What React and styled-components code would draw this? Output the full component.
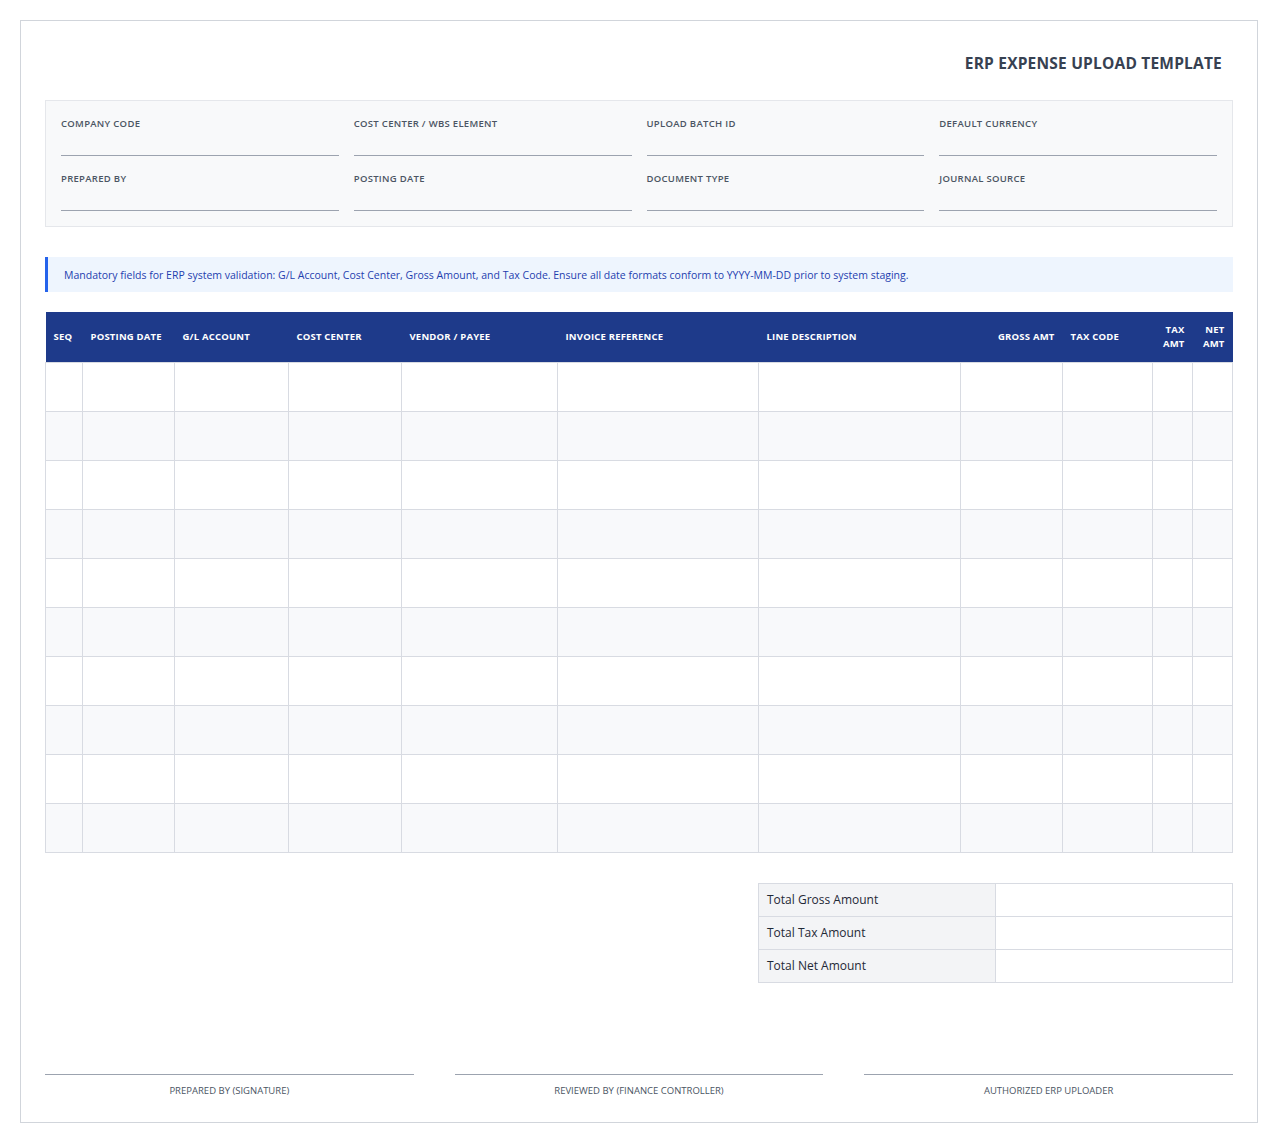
import React from 'react';
import styled, { createGlobalStyle } from 'styled-components';

const Global = createGlobalStyle`
  body { margin: 20px; background: #fff; font-family: "Open Sans", "Noto Sans", sans-serif; color: #1f2937; }
  * { box-sizing: border-box; }
`;

const Sheet = styled.div`
  width: 1238px;
  height: 1103px;
  border: 1px solid #d1d5db;
  padding: 24px 24px 24px;
  display: flex;
  flex-direction: column;
`;

const Title = styled.h1`
  margin: 7px 11px 0 0;
  text-align: right;
  font-size: 15.5px;
  font-weight: 700;
  color: #374151;
  letter-spacing: 0.2px;
  line-height: 22px;
`;

const Meta = styled.div`
  margin-top: 26px;
  background: #f8f9fa;
  border: 1px solid #e5e7eb;
  padding: 16px 15px 15px;
  display: grid;
  grid-template-columns: repeat(4, 1fr);
  column-gap: 15px;
  row-gap: 16px;
`;

const Field = styled.div`
  display: flex;
  flex-direction: column;
`;

const FieldLabel = styled.label`
  font-size: 9.5px;
  font-weight: 600;
  color: #4b5563;
  letter-spacing: 0.3px;
  line-height: 14px;
`;

const FieldLine = styled.div`
  height: 25px;
  border-bottom: 1px solid #9ca3af;
`;

const Notice = styled.div`
  margin-top: 30px;
  height: 35px;
  display: flex;
  align-items: center;
  background: #eef5fe;
  border-left: 3px solid #2563eb;
  padding-left: 16px;
  font-size: 10.5px;
  color: #1e40af;
`;

const Grid = styled.table`
  margin-top: 20px;
  width: 100%;
  border-collapse: collapse;
  table-layout: fixed;
`;

const Th = styled.th`
  background: #1e3a8a;
  color: #fff;
  font-size: 9.5px;
  font-weight: 700;
  height: 50px;
  padding: 0 8px;
  text-align: ${p => (p.$right ? 'right' : 'left')};
  letter-spacing: 0.2px;
  line-height: 14px;
`;

const Td = styled.td`
  height: 49px;
  border: 1px solid #d8dbe2;
  background: ${p => (p.$alt ? '#f8f9fb' : '#fff')};
`;

const Totals = styled.table`
  margin-top: 30px;
  margin-left: auto;
  width: 475px;
  border-collapse: collapse;
  table-layout: fixed;
`;

const TotalLabel = styled.td`
  height: 33px;
  border: 1px solid #d8dbe2;
  background: #f3f4f6;
  padding: 0 8px;
  font-size: 12px;
  font-weight: 500;
  color: #1f2937;
`;

const TotalValue = styled.td`
  border: 1px solid #d8dbe2;
`;

const Signatures = styled.div`
  margin-top: auto;
  display: grid;
  grid-template-columns: repeat(3, 1fr);
  column-gap: 41px;
`;

const Sign = styled.div`
  border-top: 1px solid #9ca3af;
  padding-top: 9px;
  text-align: center;
  font-size: 9.5px;
  color: #4b5563;
  line-height: 14px;
`;

const meta = [
  'COMPANY CODE', 'COST CENTER / WBS ELEMENT', 'UPLOAD BATCH ID', 'DEFAULT CURRENCY',
  'PREPARED BY', 'POSTING DATE', 'DOCUMENT TYPE', 'JOURNAL SOURCE',
];

const cols = [
  { label: 'SEQ', w: 37 },
  { label: 'POSTING DATE', w: 92 },
  { label: 'G/L ACCOUNT', w: 114 },
  { label: 'COST CENTER', w: 113 },
  { label: 'VENDOR / PAYEE', w: 156 },
  { label: 'INVOICE REFERENCE', w: 201 },
  { label: 'LINE DESCRIPTION', w: 202 },
  { label: 'GROSS AMT', w: 102, right: true },
  { label: 'TAX CODE', w: 90 },
  { label: <>TAX<br />AMT</>, w: 40, right: true },
  { label: <>NET<br />AMT</>, w: 40, right: true },
];

export default function App() {
  return (
    <>
      <Global />
      <Sheet>
        <Title>ERP EXPENSE UPLOAD TEMPLATE</Title>
        <Meta>
          {meta.map(m => (
            <Field key={m}>
              <FieldLabel>{m}</FieldLabel>
              <FieldLine />
            </Field>
          ))}
        </Meta>
        <Notice>
          Mandatory fields for ERP system validation: G/L Account, Cost Center, Gross Amount, and Tax Code. Ensure all date formats conform to YYYY-MM-DD prior to system staging.
        </Notice>
        <Grid>
          <colgroup>
            {cols.map((c, i) => <col key={i} style={{ width: c.w }} />)}
          </colgroup>
          <thead>
            <tr>
              {cols.map((c, i) => <Th key={i} $right={c.right}>{c.label}</Th>)}
            </tr>
          </thead>
          <tbody>
            {Array.from({ length: 10 }).map((_, r) => (
              <tr key={r}>
                {cols.map((c, i) => <Td key={i} $alt={r % 2 === 1} />)}
              </tr>
            ))}
          </tbody>
        </Grid>
        <Totals>
          <tbody>
            {['Total Gross Amount', 'Total Tax Amount', 'Total Net Amount'].map(t => (
              <tr key={t}>
                <TotalLabel>{t}</TotalLabel>
                <TotalValue />
              </tr>
            ))}
          </tbody>
        </Totals>
        <Signatures>
          <Sign>PREPARED BY (SIGNATURE)</Sign>
          <Sign>REVIEWED BY (FINANCE CONTROLLER)</Sign>
          <Sign>AUTHORIZED ERP UPLOADER</Sign>
        </Signatures>
      </Sheet>
    </>
  );
}
